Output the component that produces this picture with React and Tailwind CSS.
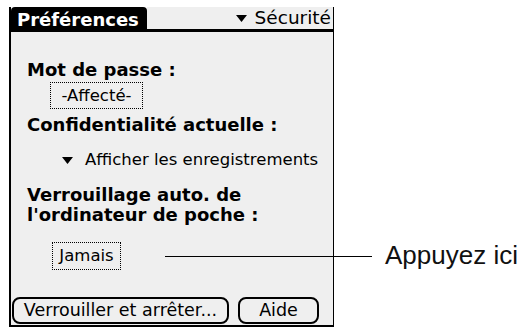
import React from "react";

const palm = { fontFamily: '"DejaVu Sans", "Noto Sans", sans-serif' };

function Triangle({ className = "" }) {
  return (
    <svg width="11" height="7" viewBox="0 0 11 7" className={className}>
      <path d="M0 0 H11 L5.5 7 Z" fill="black" />
    </svg>
  );
}

export default function App() {
  return (
    <div className="relative w-[526px] h-[332px] bg-white overflow-hidden" style={palm}>
      <div className="ml-[9px] pt-[7px] w-[325px]">
        <div className="flex h-[320px] flex-col bg-[#efefef] border-l-2 border-r border-b-2 border-black">
          {/* title bar */}
          <div className="flex h-[25px] items-stretch bg-white">
            <div className="flex w-[136px] items-center rounded-t-[4px] bg-black pl-[6px] text-[18px] font-bold text-white">
              Préférences
            </div>
            <div className="flex flex-1 items-center justify-end gap-[8px] border-b-[3px] border-black bg-[#efefef] pr-[2px] text-[18.5px] text-black">
              <Triangle />
              <span>Sécurité</span>
            </div>
          </div>

          <div className="flex flex-1 flex-col pl-[16px] text-black">
            <div className="mt-[28px] text-[18px] font-bold leading-[20px]">Mot de passe :</div>
            <div className="ml-[23px] mt-[2px] w-[93px] border border-dotted border-black text-center text-[16.5px] leading-[25px]">
              -Affecté-
            </div>
            <div className="mt-[6px] text-[18px] font-bold leading-[20px]">Confidentialité actuelle :</div>
            <div className="ml-[35px] mt-[15px] flex items-center gap-[12px] text-[16.5px] leading-[20px]">
              <Triangle />
              <span>Afficher les enregistrements</span>
            </div>
            <div className="mt-[15px] text-[18px] font-bold leading-[20px]">
              Verrouillage auto. de
              <br />
              l'ordinateur de poche :
            </div>
            <div className="ml-[25px] mt-[17px] w-[69px] border border-dotted border-black text-center text-[16.5px] leading-[26px]">
              Jamais
            </div>
            <div className="mt-auto mb-[1px] -ml-[16px] flex gap-[9px] pl-[1px]">
              <button className="h-[27px] w-[217px] rounded-[8px] border-2 border-black text-[17.5px] leading-none">
                Verrouiller et arrêter...
              </button>
              <button className="h-[27px] w-[81px] rounded-[8px] border-2 border-black text-[17.5px] leading-none">
                Aide
              </button>
            </div>
          </div>
        </div>
      </div>

      {/* callout */}
      <div className="absolute left-[165px] top-[256px] h-px w-[207px] bg-black" />
      <div
        className="absolute left-[385px] top-[240px] text-[26px] leading-[30px] text-[#111]"
        style={{ fontFamily: '"Liberation Sans", Arial, sans-serif' }}
      >
        Appuyez ici
      </div>
    </div>
  );
}
